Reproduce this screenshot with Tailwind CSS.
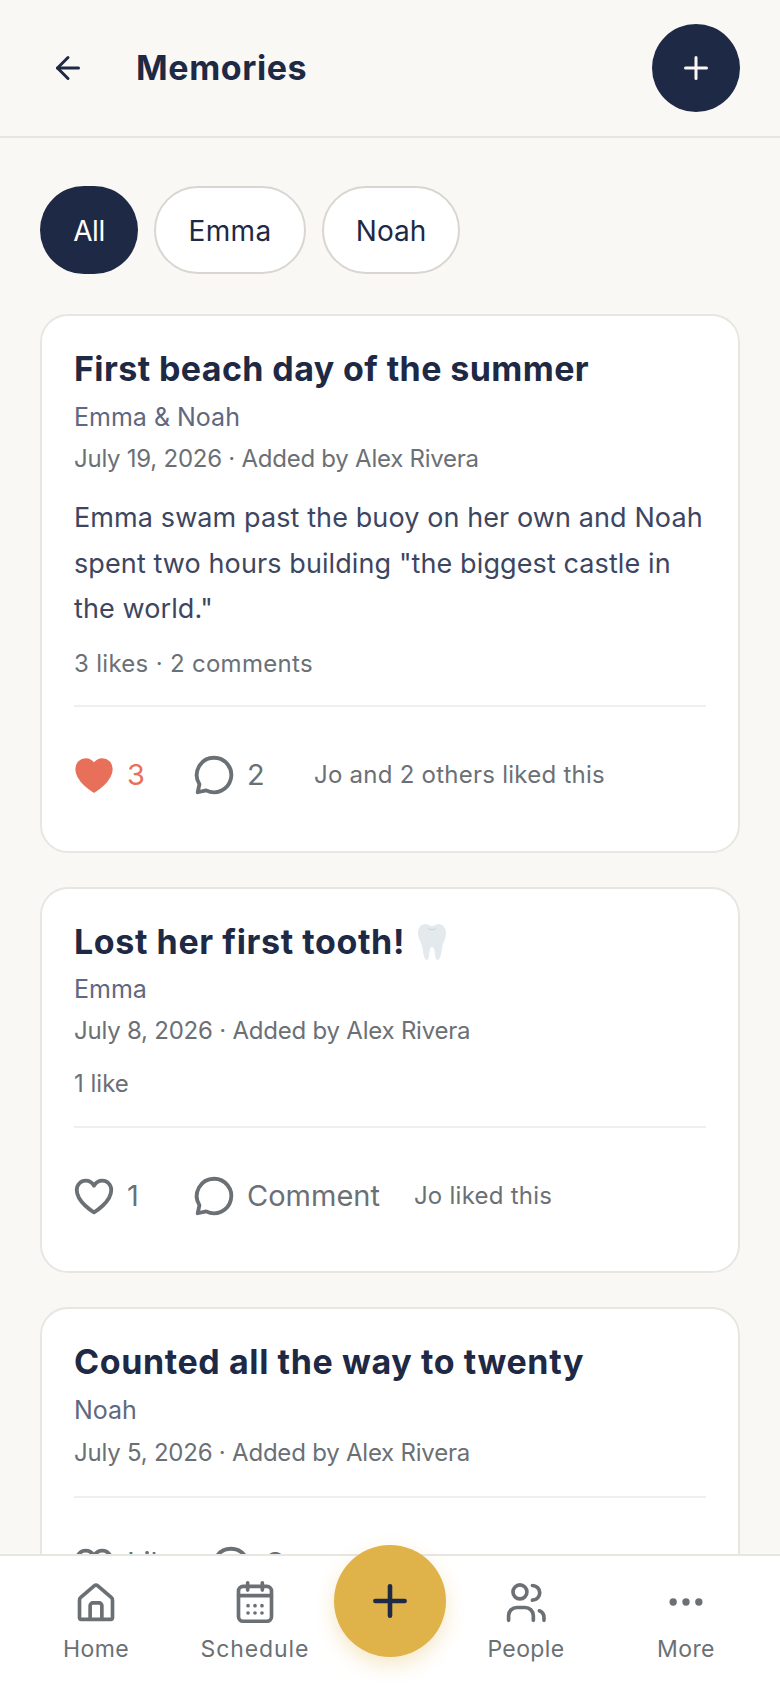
<!DOCTYPE html>
<html lang="en">
<head>
  <meta charset="utf-8"/>
  <meta content="width=device-width, initial-scale=1.0" name="viewport"/>
  <title>Memories</title>
  <script src="https://cdn.jsdelivr.net/npm/@tailwindcss/browser@4"></script>
</head>
<body class="bg-[#faf8f5] font-['Inter',sans-serif] text-[#1e2945]">
<div class="relative flex flex-col h-[1688px] overflow-hidden">
  <!-- Header -->
  <header class="flex items-center justify-between h-[138px] shrink-0 pl-[50px] pr-[40px] border-b-2 border-[#e8e6e1]">
    <div class="flex items-center gap-[50px]">
      <svg class="w-[36px] h-[36px]" viewBox="0 0 24 24" fill="none" stroke="#1e2945" stroke-width="2" stroke-linecap="round" stroke-linejoin="round"><path d="M19 12H5"/><path d="M12 19l-7-7 7-7"/></svg>
      <h1 class="text-[34px] tracking-[0.6px] font-bold leading-none">Memories</h1>
    </div>
    <button class="flex items-center justify-center w-[88px] h-[88px] rounded-full bg-[#1e2945]">
      <svg class="w-[36px] h-[36px]" viewBox="0 0 24 24" fill="none" stroke="#faf8f5" stroke-width="2" stroke-linecap="round"><path d="M12 5v14"/><path d="M5 12h14"/></svg>
    </button>
  </header>

  <main class="flex-1 min-h-0 overflow-hidden px-[40px] pt-[48px]">
    <!-- Filter chips -->
    <div class="flex gap-[16px] mb-[40px]">
      <span class="flex items-center justify-center w-[98px] h-[88px] pt-[2px] rounded-full bg-[#1e2945] text-white text-[28px] tracking-[-0.5px]">All</span>
      <span class="flex items-center justify-center w-[152px] h-[88px] pt-[2px] rounded-full bg-white border-2 border-[#d9d6d0] text-[28px] tracking-[0.3px]">Emma</span>
      <span class="flex items-center justify-center w-[138px] h-[88px] pt-[2px] rounded-full bg-white border-2 border-[#d9d6d0] text-[28px]">Noah</span>
    </div>

    <div class="flex flex-col gap-[34px]">
      <!-- Card 1 -->
      <article class="bg-white border-2 border-[#e8e6e1] rounded-[28px] px-[32px] pt-[30px] pb-[8px]">
        <h2 class="text-[34px] tracking-[0.4px] leading-[46px] font-bold">First beach day of the summer</h2>
        <p class="mt-[5px] text-[25px] leading-[40px] text-[#5f6880]">Emma &amp; Noah</p>
        <p class="mt-[4px] text-[24px] tracking-[-0.25px] leading-[36px] text-[#6b7075]">July 19, 2026 · Added by Alex Rivera</p>
        <p class="mt-[18px] text-[27px] tracking-[0.1px] leading-[45.5px] text-[#3d4660]">Emma swam past the buoy on her own and Noah spent two hours building "the biggest castle in the world."</p>
        <p class="mt-[14px] text-[24px] tracking-[0.3px] leading-[36px] text-[#6b7075]">3 likes · 2 comments</p>
        <div class="mt-[23px] border-t-2 border-[#f0efec]"></div>
        <div class="flex items-center h-[136px] -ml-[3px] text-[29px] text-[#6b7075]">
          <svg class="w-[46px] h-[46px] mr-[10px]" viewBox="0 0 24 24" fill="#e8705a" stroke="#e8705a" stroke-width="1.5" stroke-linejoin="round"><path d="M12 20.500S3 15.300 3 8.900C3 6 5.200 4 7.600 4c1.800 0 3.400 1 4.400 2.600C13 5 14.600 4 16.400 4 18.800 4 21 6 21 8.900c0 6.400-9 11.600-9 11.600z"/></svg>
          <span class="w-[64px] text-[#e8705a]">3</span>
          <svg class="w-[46px] h-[46px] mr-[10px]" viewBox="0 0 24 24" fill="none" stroke="#6b7075" stroke-width="2" stroke-linejoin="round"><path d="M12 3a9 9 0 1 1-4.100 17l-4.400 1 .9-4.200A9 9 0 0 1 12 3z"/></svg>
          <span class="w-[67px]">2</span>
          <span class="text-[24px] tracking-[0.25px]">Jo and 2 others liked this</span>
        </div>
      </article>

      <!-- Card 2 -->
      <article class="bg-white border-2 border-[#e8e6e1] rounded-[28px] px-[32px] pt-[30px] pb-[7px]">
        <h2 class="flex items-center text-[34px] tracking-[0.6px] leading-[46px] font-bold">Lost her first tooth!
          <svg class="ml-[12px] w-[30px] h-[38px]" viewBox="0 0 30 38"><path d="M8 1c3 0 5 2 7 2s4-2 7-2c4 0 7 4 7 9 0 6-3 9-4 15-.6 4-1.500 12-4.500 12-3.500 0-1.500-13-5.500-13S13.500 37 10 37c-3 0-4-8-4.500-12C4.500 19 1 16 1 10 1 5 4 1 8 1z" fill="#e3e9ed"/><path d="M10 4c2 3 8 3 10 0-1 4-9 4-10 0z" fill="#a9d3e6"/></svg>
        </h2>
        <p class="mt-[4px] text-[25px] leading-[40px] text-[#5f6880]">Emma</p>
        <p class="mt-[4px] text-[24px] tracking-[-0.22px] leading-[36px] text-[#6b7075]">July 8, 2026 · Added by Alex Rivera</p>
        <p class="mt-[17px] text-[24px] leading-[36px] text-[#6b7075]">1 like</p>
        <div class="mt-[24px] border-t-2 border-[#f0efec]"></div>
        <div class="flex items-center h-[136px] -ml-[3px] text-[29px] text-[#6b7075]">
          <svg class="w-[46px] h-[46px] mr-[10px]" viewBox="0 0 24 24" fill="none" stroke="#6b7075" stroke-width="2" stroke-linejoin="round"><path d="M12 20.500S3 15.300 3 8.900C3 6 5.200 4 7.600 4c1.800 0 3.400 1 4.400 2.600C13 5 14.600 4 16.400 4 18.800 4 21 6 21 8.900c0 6.400-9 11.600-9 11.600z"/></svg>
          <span class="w-[64px]">1</span>
          <svg class="w-[46px] h-[46px] mr-[10px]" viewBox="0 0 24 24" fill="none" stroke="#6b7075" stroke-width="2" stroke-linejoin="round"><path d="M12 3a9 9 0 1 1-4.100 17l-4.400 1 .9-4.200A9 9 0 0 1 12 3z"/></svg>
          <span class="mr-[34px]">Comment</span>
          <span class="text-[24px] tracking-[0.25px]">Jo liked this</span>
        </div>
      </article>

      <!-- Card 3 -->
      <article class="bg-white border-2 border-[#e8e6e1] rounded-[28px] px-[32px] pt-[30px] pb-[8px]">
        <h2 class="text-[34px] tracking-[0.6px] leading-[46px] font-bold">Counted all the way to twenty</h2>
        <p class="mt-[5px] text-[25px] leading-[40px] text-[#5f6880]">Noah</p>
        <p class="mt-[5px] text-[24px] tracking-[-0.22px] leading-[36px] text-[#6b7075]">July 5, 2026 · Added by Alex Rivera</p>
        <div class="mt-[25px] border-t-2 border-[#f0efec]"></div>
        <div class="flex items-center h-[136px] -ml-[3px] text-[29px] text-[#6b7075]">
          <svg class="w-[46px] h-[46px] mr-[10px]" viewBox="0 0 24 24" fill="none" stroke="#6b7075" stroke-width="2" stroke-linejoin="round"><path d="M12 20.500S3 15.300 3 8.900C3 6 5.200 4 7.600 4c1.800 0 3.400 1 4.400 2.600C13 5 14.600 4 16.400 4 18.800 4 21 6 21 8.900c0 6.400-9 11.600-9 11.600z"/></svg>
          <span class="w-[81px] -translate-y-[3px]">Like</span>
          <svg class="w-[46px] h-[46px] mr-[10px]" viewBox="0 0 24 24" fill="none" stroke="#6b7075" stroke-width="2" stroke-linejoin="round"><path d="M12 3a9 9 0 1 1-4.100 17l-4.400 1 .9-4.200A9 9 0 0 1 12 3z"/></svg>
          <span class="-translate-y-[3px]">Comment</span>
        </div>
      </article>
    </div>
  </main>

  <!-- Bottom nav -->
  <nav class="relative z-10 grid grid-cols-[192px_126px_142px_132px_188px] shrink-0 h-[134px] bg-white border-t-2 border-[#e8e6e1] text-[23px] tracking-[0.4px] text-[#6b7075]">
    <a class="flex flex-col items-center pt-[24px]">
      <svg class="w-[44px] h-[44px]" viewBox="0 0 24 24" fill="none" stroke="#6b7075" stroke-width="2" stroke-linejoin="round"><path d="M3 11a2 2 0 0 1 .7-1.500L11 3.200a1.500 1.500 0 0 1 2 0l7.300 6.300a2 2 0 0 1 .7 1.500v9.500a1 1 0 0 1-1 1H4a1 1 0 0 1-1-1z"/><path d="M8.800 22v-8a1.500 1.500 0 0 1 1.500-1.500h3.400a1.500 1.500 0 0 1 1.500 1.500v8"/></svg>
      <span class="mt-[8px]">Home</span>
    </a>
    <a class="flex flex-col items-center pt-[24px]">
      <svg class="w-[44px] h-[44px]" viewBox="0 0 24 24" fill="none" stroke="#6b7075" stroke-width="2" stroke-linecap="round"><rect x="3" y="3.500" width="18" height="19" rx="2.500"/><path d="M8 1.500v4M16 1.500v4M3 8.500h18"/><path d="M8.200 14h.01M12 14h.01M15.800 14h.01M8.200 18h.01M12 18h.01M15.800 18h.01"/></svg>
      <span class="mt-[8px] tracking-[0.9px]">Schedule</span>
    </a>
    <span></span>
    <a class="flex flex-col items-center pt-[24px]">
      <svg class="w-[44px] h-[44px]" viewBox="0 0 24 24" fill="none" stroke="#6b7075" stroke-width="2" stroke-linecap="round"><circle cx="8.700" cy="6.500" r="3.800"/><path d="M2.500 22v-2.500A4.500 4.500 0 0 1 7 15h4.500a4.500 4.500 0 0 1 4.500 4.500V22"/><path d="M15.500 3a4 4 0 0 1 0 8"/><path d="M21.800 22v-1.500a4 4 0 0 0-2.500-3.700"/></svg>
      <span class="mt-[8px]">People</span>
    </a>
    <a class="flex flex-col items-center pt-[24px]">
      <svg class="w-[44px] h-[44px]" viewBox="0 0 24 24" fill="#6b7075"><circle cx="5" cy="12" r="2"/><circle cx="12" cy="12" r="2"/><circle cx="19" cy="12" r="2"/></svg>
      <span class="mt-[8px]">More</span>
    </a>
  </nav>

  <!-- Floating add button -->
  <button class="absolute z-20 left-[334px] top-[1545px] flex items-center justify-center w-[112px] h-[112px] rounded-full bg-[#e0b24a] shadow-[0_8px_20px_rgba(224,178,74,0.3)]">
    <svg class="w-[44px] h-[44px]" viewBox="0 0 24 24" fill="none" stroke="#1e2945" stroke-width="2.500" stroke-linecap="round"><path d="M12 4v16"/><path d="M4 12h16"/></svg>
  </button>
</div>
</body>
</html>
